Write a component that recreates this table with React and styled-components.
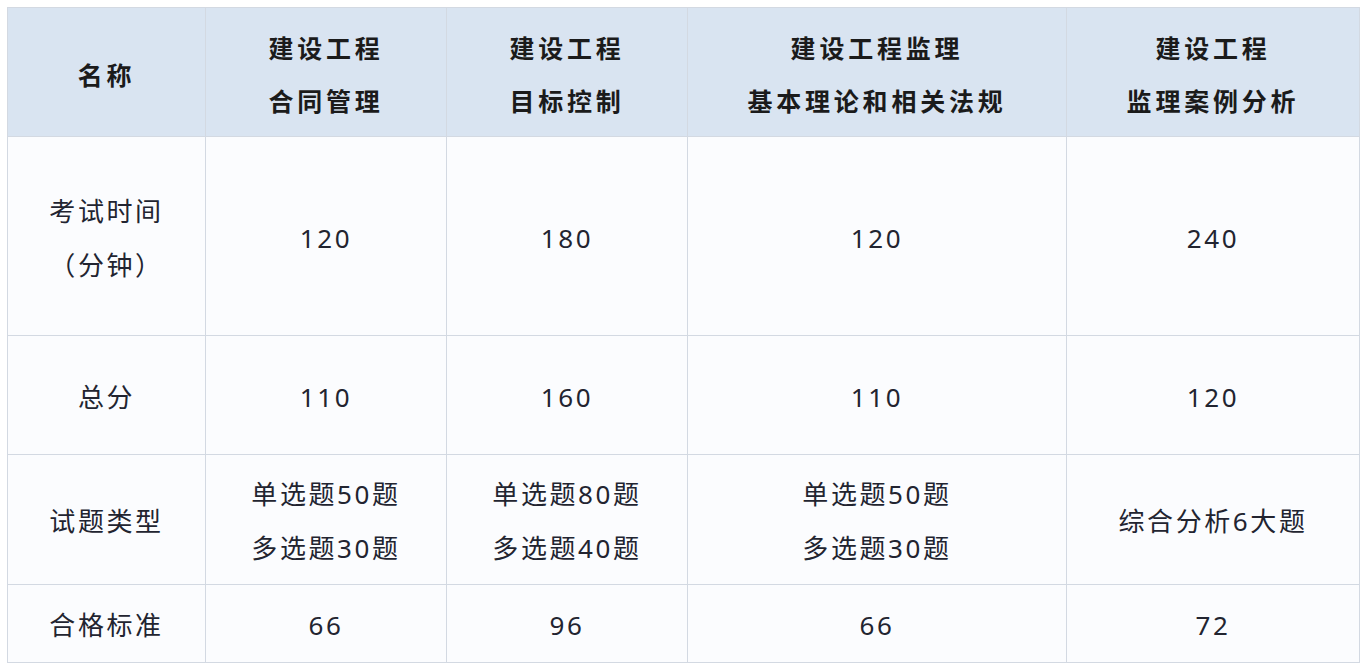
import React from 'react';
import styled, { createGlobalStyle } from 'styled-components';

const GlobalStyle = createGlobalStyle`
	html, body {
		margin: 0;
		padding: 0;
		background: #ffffff;
	}
	body {
		font-family: 'Noto Sans', 'Noto Sans CJK SC', sans-serif;
	}
`;

const Page = styled.div`
	padding: 7px 9px 0 7px;
`;

const Table = styled.table`
	width: 1352px;
	border-collapse: collapse;
	table-layout: fixed;
	border: 1px solid #d3d9e2;
	background: #fbfcfe;
`;

const HeadRow = styled.tr`
	background: #d9e4f1;
`;

const Row = styled.tr`
	height: ${({ $h }) => $h}px;
`;

const Th = styled.th`
	height: 124px;
	padding: 4px 0 0;
	border: 1px solid #d3d9e2;
	font-family: 'Noto Sans CJK SC', sans-serif;
	font-size: 25px;
	font-weight: 700;
	letter-spacing: 3.8px;
	line-height: 53px;
	color: #1b1b1b;
	text-align: center;
	vertical-align: middle;
`;

const Td = styled.td`
	padding: 3px 0 0;
	border: 1px solid #d3d9e2;
	font-family: 'Noto Sans', 'Noto Sans CJK SC', sans-serif;
	font-size: 26px;
	font-weight: 400;
	letter-spacing: 2.6px;
	line-height: 54px;
	color: #222430;
	text-align: center;
	vertical-align: middle;
`;

const Line = styled.div`
	white-space: nowrap;
`;

const widths = [198, 241, 241, 379, 293];

const headers = [
	['名称'],
	['建设工程', '合同管理'],
	['建设工程', '目标控制'],
	['建设工程监理', '基本理论和相关法规'],
	['建设工程', '监理案例分析'],
];

const rows = [
	{ h: 199, cells: [['考试时间', '（分钟）'], ['120'], ['180'], ['120'], ['240']] },
	{ h: 119, cells: [['总分'], ['110'], ['160'], ['110'], ['120']] },
	{
		h: 130,
		cells: [
			['试题类型'],
			['单选题50题', '多选题30题'],
			['单选题80题', '多选题40题'],
			['单选题50题', '多选题30题'],
			['综合分析6大题'],
		],
	},
	{ h: 78, cells: [['合格标准'], ['66'], ['96'], ['66'], ['72']] },
];

const App = () => {
	return (
		<>
			<GlobalStyle />
			<Page>
				<Table>
					<colgroup>
						{widths.map((w, i) => (
							<col key={i} style={{ width: w }} />
						))}
					</colgroup>
					<thead>
						<HeadRow>
							{headers.map((lines, i) => (
								<Th key={i}>
									{lines.map((l, j) => (
										<Line key={j}>{l}</Line>
									))}
								</Th>
							))}
						</HeadRow>
					</thead>
					<tbody>
						{rows.map((r, i) => (
							<Row key={i} $h={r.h}>
								{r.cells.map((lines, j) => (
									<Td key={j}>
										{lines.map((l, k) => (
											<Line key={k}>{l}</Line>
										))}
									</Td>
								))}
							</Row>
						))}
					</tbody>
				</Table>
			</Page>
		</>
	);
};

export default App;
